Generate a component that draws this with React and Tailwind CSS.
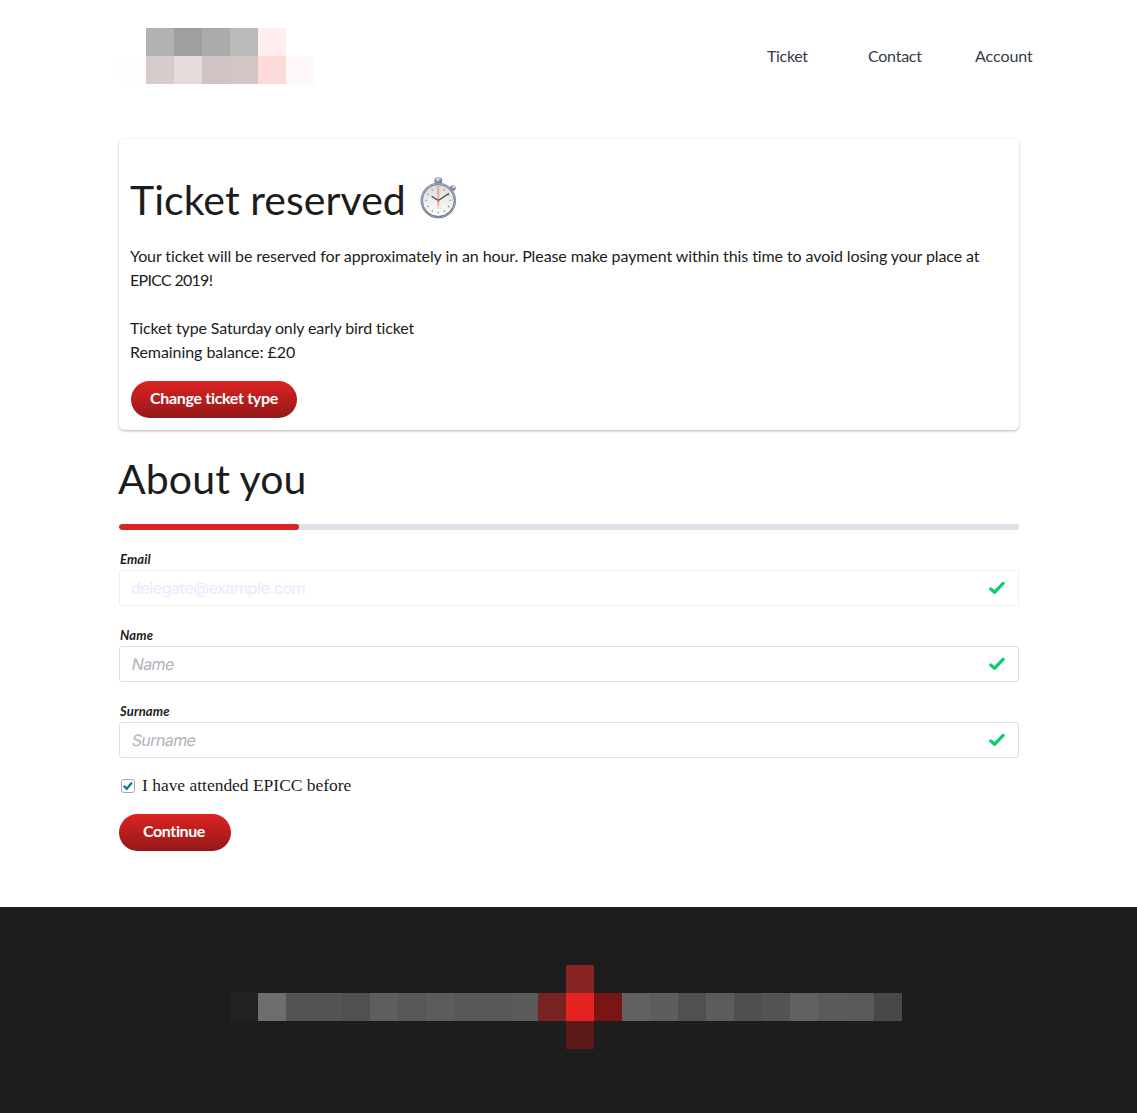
const SANS = "font-['Lato',sans-serif]";

const headerLogo = [
  ["bg-white", "bg-[#b2b2b2]", "bg-[#9f9f9f]", "bg-[#ababab]", "bg-[#bababa]", "bg-[#feeeee]", "bg-white"],
  ["bg-[#fefefe]", "bg-[#d6cccb]", "bg-[#e6dbdb]", "bg-[#cfc3c3]", "bg-[#d2c6c5]", "bg-[#fbdad9]", "bg-[#fff8f8]"],
];

const footerLogo = [
  "bg-[#222222]", "bg-[#6d6d6d]", "bg-[#535353]", "bg-[#545454]", "bg-[#505050]", "bg-[#5e5e5e]",
  "bg-[#575757]", "bg-[#5c5c5c]", "bg-[#585858]", "bg-[#585858]", "bg-[#5a5a5a]", "bg-[#782221]",
  "bg-[#e72222]", "bg-[#791515]", "bg-[#616161]", "bg-[#5d5d5d]", "bg-[#505050]", "bg-[#5c5c5c]",
  "bg-[#4f4f4f]", "bg-[#535353]", "bg-[#616161]", "bg-[#5a5a5a]", "bg-[#595959]", "bg-[#484848]",
];

function Stopwatch() {
  const ticks = Array.from({ length: 12 }, (_, i) => i * 30);
  return (
    <svg className="ml-auto mt-[2px] h-[42px] w-[37px]" viewBox="0 0 37 42">
      <defs>
        <linearGradient id="rim" x1="0" y1="0" x2="0" y2="1">
          <stop offset="0" stopColor="#788797" />
          <stop offset=".45" stopColor="#6f8295" />
          <stop offset="1" stopColor="#5b6068" />
        </linearGradient>
        <linearGradient id="face" x1="0" y1="0" x2="0" y2="1">
          <stop offset="0" stopColor="#dcdcdc" />
          <stop offset="1" stopColor="#ffffff" />
        </linearGradient>
        <radialGradient id="knob" cx=".45" cy=".3" r=".75">
          <stop offset="0" stopColor="#e9edf0" />
          <stop offset=".5" stopColor="#8f9aa5" />
          <stop offset="1" stopColor="#46525f" />
        </radialGradient>
      </defs>
      <rect x="16" y="5" width="4.500" height="4" fill="#7d8790" />
      <ellipse cx="18.200" cy="3.500" rx="3.900" ry="3.300" fill="url(#knob)" />
      <path d="m29.500 13.500 3-3" stroke="#63717f" strokeWidth="2.500" />
      <ellipse cx="33" cy="10.700" rx="3" ry="2.300" fill="url(#knob)" transform="rotate(35 33 10.700)" />
      <circle cx="18.300" cy="23.500" r="17.800" fill="url(#rim)" />
      <circle cx="18.300" cy="23.500" r="16.700" fill="none" stroke="#abc5df" strokeWidth=".8" />
      <circle cx="18.300" cy="23.500" r="15.700" fill="url(#face)" stroke="#596572" strokeWidth=".5" />
      {ticks.map((a) => (
        <path key={a} d="M18.300 10.500v2" stroke="#adadad" strokeWidth="1.500" transform={`rotate(${a} 18.300 23.500)`} />
      ))}
      <path d="M16 16h5M15.500 31h6" stroke="#d8d4d4" />
      <path d="M18.300 9V29" stroke="#f59a88" strokeWidth="1.600" />
      <path d="m11.500 19.300 6.800 4.200 10.500-7" fill="none" stroke="#35454b" strokeWidth="1.200" />
      <circle cx="18.300" cy="23.700" r="1.300" fill="#d9745e" />
    </svg>
  );
}

function Field({ label, value, labelClass, boxClass, textClass }) {
  return (
    <div className="mb-[16px] h-[60px]">
      <div className={`h-[24px] pl-[1px] text-[13px] font-bold italic leading-[26px] ${labelClass}`}>{label}</div>
      <div className={`flex h-[36px] items-center justify-between rounded-[3px] border pr-[13px] ${boxClass}`}>
        <span className={`inline-block font-['Inter',sans-serif] text-[16px] leading-[24px] ${textClass}`}>{value}</span>
        <svg className="h-[16px] w-[17px]" viewBox="0 0 17 16" fill="none">
          <path d="m2.800 9 3.700 3.300 8.600-9" stroke="#06cf6c" strokeWidth="3.200" strokeLinecap="round" strokeLinejoin="round" />
        </svg>
      </div>
    </div>
  );
}

export default function App() {
  return (
    <div className={`${SANS} flex h-[1113px] w-[1137px] flex-col bg-white text-[16px] leading-[24px] text-[#1c1c1c]`}>
      <header className="flex h-[138px] shrink-0 items-start pl-[118px] pt-[28px]">
        <div>
          {headerLogo.map((row, r) => (
            <div key={r} className="flex">
              {row.map((c, i) => (
                <div key={i} className={`h-[28px] w-[28px] ${c}`} />
              ))}
            </div>
          ))}
        </div>
        <nav className="ml-[453px] mt-[16px] flex text-[#363b47]">
          <a className="w-[101px] tracking-[-0.330px]">Ticket</a>
          <a className="w-[107px] tracking-[-0.250px]">Contact</a>
          <a className="tracking-[-0.050px]">Account</a>
        </nav>
      </header>

      <main className="ml-[119px] flex w-[900px] flex-col">
        <section className="mt-[1px] h-[291px] rounded-[5px] px-[11px] pt-[36px] shadow-[0_1px_3px_rgba(0,0,0,0.2),0_1px_2px_rgba(0,0,0,0.1)]">
          <h1 className="flex h-[51px] w-[327px] items-start whitespace-nowrap text-[41px] leading-[50px]">
            <span className="tracking-[0.050px]">Ticket reserved</span>
            <Stopwatch />
          </h1>
          <p className="mt-[18px] whitespace-nowrap">
            <span className="tracking-[-0.090px]">Your ticket will be reserved for approximately in an hour. Please make payment within this time to avoid losing your place at</span>
            <br />
            <span className="tracking-[-0.700px]">EPICC 2019!</span>
          </p>
          <p className="mt-[24px] whitespace-nowrap">
            <span className="tracking-[-0.125px]">Ticket type Saturday only early bird ticket</span>
            <br />
            <span className="tracking-[-0.060px]">Remaining balance: £20</span>
          </p>
          <button className="ml-[1px] mt-[17px] flex h-[37px] w-[166px] items-center justify-center whitespace-nowrap rounded-full bg-linear-to-b from-[#dd2222] to-[#941818] pb-[3px] font-bold text-white">
            <span className="tracking-[-0.320px]">Change ticket type</span>
          </button>
        </section>

        <h2 className="-ml-[1px] mt-[24px] h-[50px] whitespace-nowrap text-[41px] leading-[50px] tracking-[0.100px]">
          <span>About you</span>
        </h2>
        <div className="mb-[22px] mt-[20px] h-[6px] overflow-hidden rounded-full bg-[#e1e0e9]">
          <div className="h-full w-[180px] rounded-full bg-[#dd2222]" />
        </div>

        <div className="-mt-[6px]">
          <Field label="Email" value="delegate@example.com" labelClass="tracking-[0.100px]" boxClass="border-[#f0f0f2]" textClass="pl-[11px] text-[#eeeafd] font-medium tracking-[-0.520px]" />
          <Field label="Name" value="Name" labelClass="tracking-[0.150px]" boxClass="border-[#dfdee7]" textClass="pl-[12px] -skew-x-[10deg] text-[#b3b1bb] tracking-[-0.600px]" />
          <Field label="Surname" value="Surname" labelClass="tracking-[0.150px]" boxClass="border-[#dfdee7]" textClass="pl-[12px] -skew-x-[10deg] text-[#b3b1bb] tracking-[-0.600px]" />
        </div>

        <label className="flex h-[24px] items-center pl-[2px]">
          <span className="flex h-[14px] w-[14px] items-center justify-center rounded-[3px] border border-[#aaaaaa] bg-white">
            <svg className="h-[10px] w-[12px] shrink-0" viewBox="0 0 12 10" fill="none">
              <path d="m1.800 4.900 2.900 2.800L10 1.500" stroke="#087c9b" strokeWidth="2.300" />
            </svg>
          </span>
          <span className="mb-[2px] ml-[7px] whitespace-nowrap font-['Liberation_Serif',serif] text-[17.500px] tracking-[-0.020px]">I have attended EPICC before</span>
        </label>
        <button className="mt-[16px] flex h-[37px] w-[112px] items-center justify-center rounded-full bg-linear-to-b from-[#dd2222] to-[#941818] pb-[3px] pr-[2px] font-bold text-white">
          <span className="tracking-[-0.400px]">Continue</span>
        </button>
      </main>

      <footer className="mt-auto flex h-[206px] shrink-0 flex-col bg-[#1d1d1d] pl-[230px] pt-[58px]">
        <div className="ml-[336px] h-[28px] w-[28px] bg-[#882323]" />
        <div className="flex">
          {footerLogo.map((c, i) => (
            <div key={i} className={`h-[28px] w-[28px] ${c}`} />
          ))}
        </div>
        <div className="ml-[336px] h-[28px] w-[28px] bg-[#5d191a]" />
      </footer>
    </div>
  );
}
